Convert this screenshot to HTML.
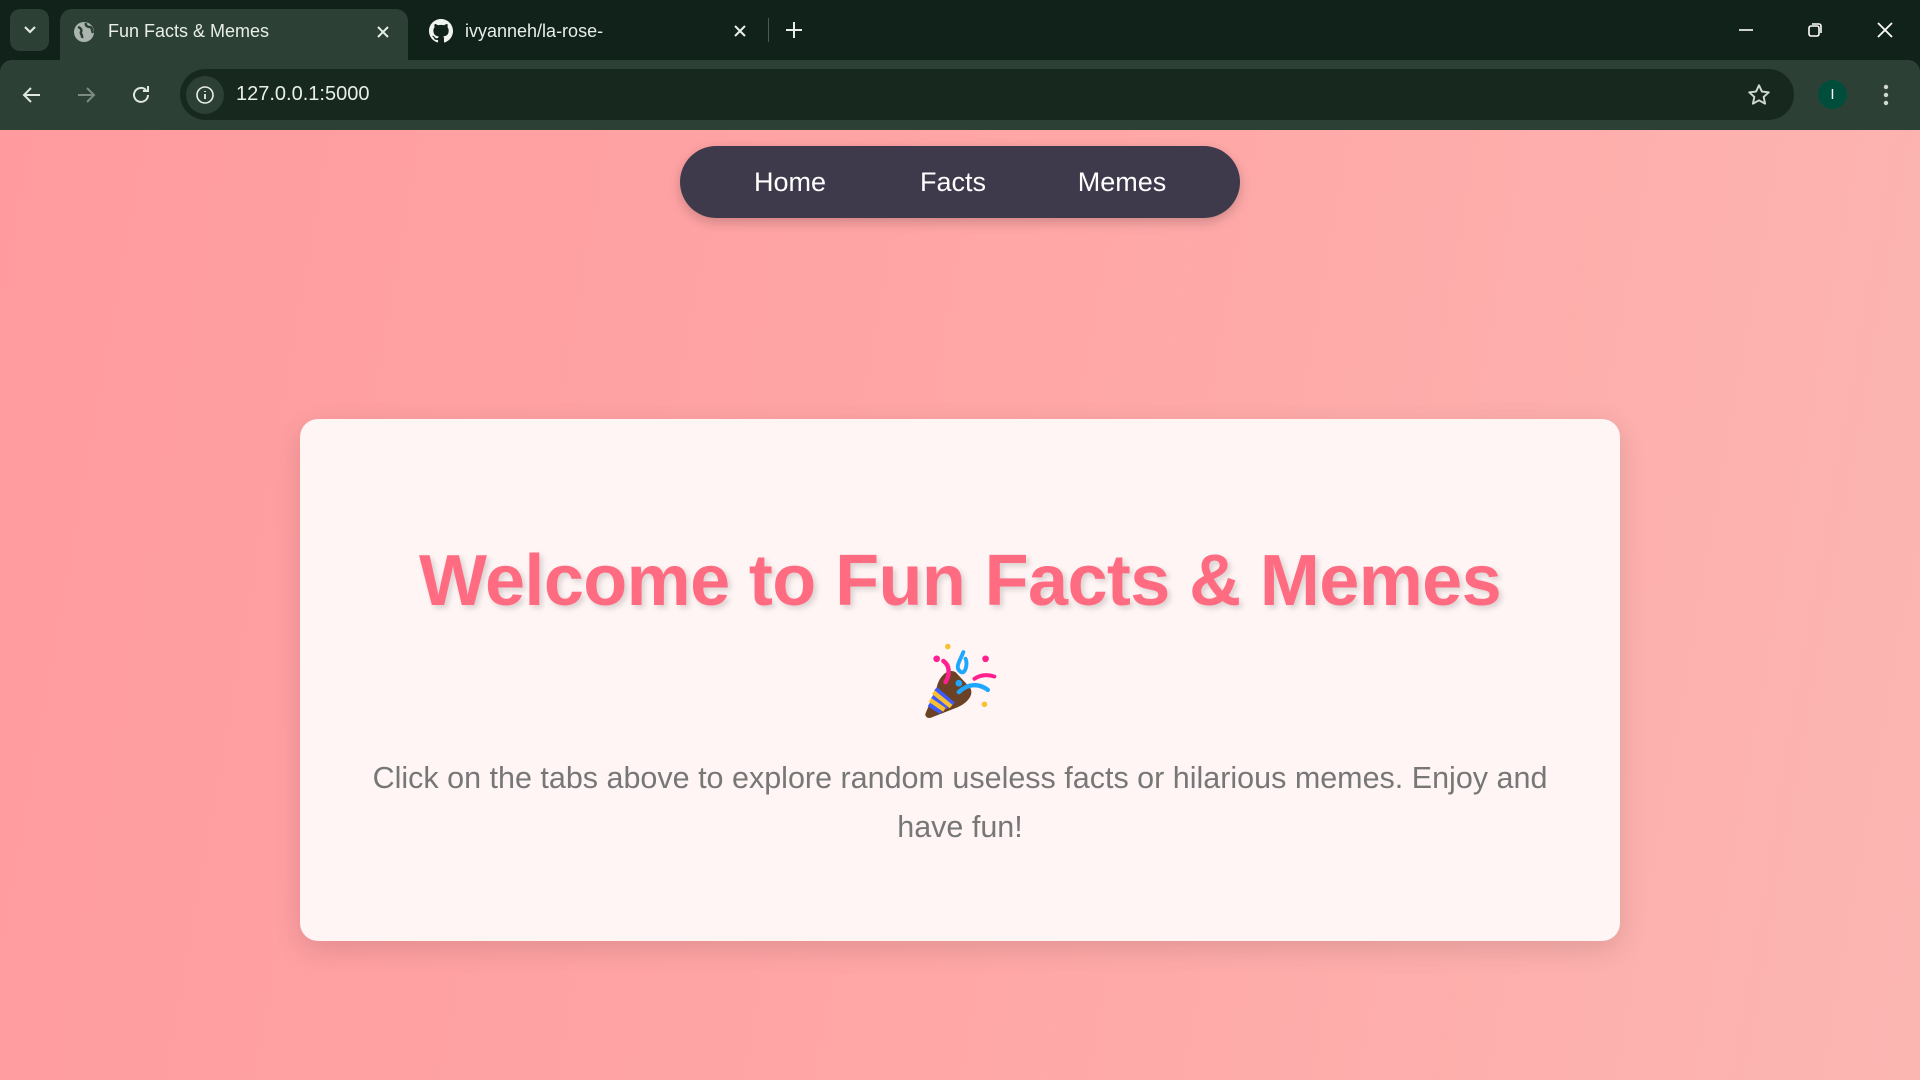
<!DOCTYPE html>
<html><head><meta charset="utf-8"><style>
*{margin:0;padding:0;box-sizing:border-box}
body{width:1920px;height:1080px;overflow:hidden;font-family:"Liberation Sans",sans-serif;background:#10221a;position:relative}
.tabbar{position:absolute;top:0;left:0;width:1920px;height:60px;background:#10221a}
.tabbtn{position:absolute;left:10px;top:9px;width:39px;height:42px;background:#2d4035;border-radius:10px}
.tab{position:absolute;left:60px;top:9px;width:348px;height:51px;background:#2d4035;border-radius:12px 12px 0 0}
.tab .t{position:absolute;left:48px;top:12px;color:#e8eee9;font-size:18px}
.tab2 .t{position:absolute;left:465px;top:21px;color:#e8eee9;font-size:18px}
.toolbar{position:absolute;top:60px;left:0;width:1920px;height:70px;background:#2d4035;border-radius:12px 12px 0 0}
.url{position:absolute;left:180px;top:69px;width:1614px;height:51px;background:#17291f;border-radius:26px}
.page{position:absolute;top:130px;left:0;width:1920px;height:950px;background:linear-gradient(100deg,#ff9b9f 0%,#ffa6a6 50%,#fcb6b2 100%)}
.nav{position:absolute;left:680px;top:16px;width:560px;height:72px;background:#3e3a4c;border-radius:36px;box-shadow:0 4px 12px rgba(0,0,0,.2)}
.nav span{position:absolute;top:21px;color:#fff;font-size:27px;transform:translateX(-50%)}
.card{position:absolute;left:300px;top:289px;width:1320px;height:522px;background:#fff5f5;border-radius:18px;box-shadow:0 8px 28px rgba(0,0,0,.12)}
h1{position:absolute;left:0;width:1320px;top:121px;text-align:center;color:#ff6b81;font-size:72px;font-weight:bold;letter-spacing:-0.6px;text-shadow:3px 3px 6px rgba(0,0,0,.15)}
p{position:absolute;left:45px;width:1230px;top:335px;text-align:center;color:#777;font-size:30.5px;line-height:49px}
</style></head><body>
<div class="tabbar">
<div class="tabbtn"><svg width="39" height="42"><path d="M15 18l5 5 5-5" stroke="#dfe7e1" stroke-width="2.2" fill="none"/></svg></div>
<div class="tab"><svg style="position:absolute;left:13px;top:12px" width="22" height="22"><circle cx="11" cy="11" r="10" fill="#a9b5ae"/><path d="M5 6c3 1 4 3 3 5s2 3 1 6M13 2c-1 3 2 4 4 4s2 4 3 6" stroke="#2d4035" stroke-width="2.5" fill="none"/></svg><span class="t">Fun Facts &amp; Memes</span>
<svg style="position:absolute;left:315px;top:15px" width="16" height="16"><path d="M3 3l10 10M13 3L3 13" stroke="#e8eee9" stroke-width="2"/></svg></div>
<div class="tab2"><svg style="position:absolute;left:429px;top:19px" width="24" height="24" viewBox="0 0 16 16"><path fill="#f0f4f1" d="M8 0C3.58 0 0 3.58 0 8c0 3.540 2.290 6.530 5.470 7.590.4.07.55-.17.55-.38v-1.33c-2.230.48-2.700-1.070-2.700-1.070-.36-.92-.89-1.170-.89-1.170-.73-.5.06-.49.06-.49.8.06 1.230.83 1.230.83.72 1.230 1.870.87 2.330.67.07-.52.28-.87.51-1.070-1.780-.2-3.640-.89-3.640-3.950 0-.87.31-1.590.82-2.150-.08-.2-.36-1.020.08-2.120 0 0 .67-.21 2.200.82.64-.18 1.320-.27 2-.27.68 0 1.360.09 2 .27 1.530-1.040 2.200-.82 2.200-.82.44 1.100.16 1.920.08 2.120.51.56.82 1.270.82 2.150 0 3.070-1.870 3.750-3.650 3.950.29.25.54.73.54 1.480v2.200c0 .21.15.46.55.38A8.010 8.010 0 0016 8c0-4.420-3.580-8-8-8z"/></svg><span class="t">ivyanneh/la-rose-</span>
<svg style="position:absolute;left:732px;top:23px" width="16" height="16"><path d="M3 3l10 10M13 3L3 13" stroke="#e8eee9" stroke-width="2"/></svg>
<div style="position:absolute;left:768px;top:18px;width:1px;height:24px;background:#4a5c51"></div>
<svg style="position:absolute;left:784px;top:20px" width="20" height="20"><path d="M10 2v16M2 10h16" stroke="#e8eee9" stroke-width="2"/></svg></div>
<svg style="position:absolute;left:1738px;top:20px" width="20" height="20"><path d="M1 10h14" stroke="#fff" stroke-width="1.6"/></svg>
<svg style="position:absolute;left:1806px;top:20px" width="20" height="20"><rect x="3" y="6" width="10" height="10" rx="2" stroke="#fff" stroke-width="1.6" fill="none"/><path d="M6 4h7a2 2 0 012 2v7" stroke="#fff" stroke-width="1.6" fill="none"/></svg>
<svg style="position:absolute;left:1875px;top:20px" width="20" height="20"><path d="M3 3l14 14M17 3L3 17" stroke="#fff" stroke-width="1.8"/></svg>
</div>
<div class="toolbar"></div>
<svg style="position:absolute;left:20px;top:83px" width="24" height="24"><path d="M20 12H5M11 5l-7 7 7 7" stroke="#dfe7e1" stroke-width="2" fill="none"/></svg>
<svg style="position:absolute;left:74px;top:83px" width="24" height="24"><path d="M4 12h15M13 5l7 7-7 7" stroke="#7d8a82" stroke-width="2" fill="none"/></svg>
<svg style="position:absolute;left:129px;top:83px" width="24" height="24"><path d="M19 12a7 7 0 11-2-5" stroke="#dfe7e1" stroke-width="2" fill="none"/><path d="M19 3v5h-5" stroke="#dfe7e1" stroke-width="2" fill="none"/></svg>
<div class="url"></div>
<div style="position:absolute;left:186px;top:76px;width:38px;height:38px;border-radius:50%;background:#2d4035"></div>
<svg style="position:absolute;left:195px;top:85px" width="20" height="20"><circle cx="10" cy="10" r="8" stroke="#e8eee9" stroke-width="1.6" fill="none"/><path d="M10 9v5M10 6v1" stroke="#e8eee9" stroke-width="1.8"/></svg>
<span style="position:absolute;left:236px;top:83px;color:#e8eee9;font-size:20px">127.0.0.1:5000</span>
<svg style="position:absolute;left:1746px;top:82px" width="26" height="26" viewBox="0 0 24 24"><path d="M12 3l2.7 5.8 6.3.7-4.7 4.3 1.3 6.2L12 16.9 6.4 20l1.3-6.2L3 9.5l6.3-.7z" stroke="#cfd8d2" stroke-width="1.8" fill="none" stroke-linejoin="round"/></svg>
<div style="position:absolute;left:1818px;top:80px;width:29px;height:29px;border-radius:50%;background:#004d3c;color:#fff;font-size:15px;text-align:center;line-height:29px">I</div>
<svg style="position:absolute;left:1878px;top:82px" width="16" height="26"><circle cx="8" cy="5" r="2.2" fill="#cfd8d2"/><circle cx="8" cy="13" r="2.2" fill="#cfd8d2"/><circle cx="8" cy="21" r="2.2" fill="#cfd8d2"/></svg>
<div class="page">
<div class="nav"><span style="left:110px">Home</span><span style="left:273px">Facts</span><span style="left:442px">Memes</span></div>
<div class="card">
<h1>Welcome to Fun Facts &amp; Memes</h1>
<svg style="position:absolute;left:620px;top:222px" width="80" height="80" viewBox="45 20 68 72">
<path d="M75 48 C68 44 60 52 58 62 L48 85 C47 88 50 90 53 89 L76 80 C86 76 92 68 88 62 Z" fill="#6b4226"/>
<path d="M54 70 L68 80 M51 77 L62 84 M57 63 L73 77" stroke="#3d5afe" stroke-width="4"/>
<path d="M52 73 L65 82 M55 66 L71 79" stroke="#fbc02d" stroke-width="4"/>
<path d="M64 38 C70 42 70 50 66 57" stroke="#ff1f8e" stroke-width="4" fill="none" stroke-linecap="round"/>
<path d="M82 30 C78 40 74 44 80 48 C84 50 86 40 84 36" stroke="#1ea7ff" stroke-width="3.5" fill="none" stroke-linecap="round"/>
<path d="M78 66 C86 58 96 58 104 64" stroke="#1ea7ff" stroke-width="4" fill="none" stroke-linecap="round"/>
<path d="M92 54 C98 50 104 50 110 52" stroke="#ff1f8e" stroke-width="3.5" fill="none" stroke-linecap="round"/>
<circle cx="58" cy="36" r="3" fill="#ff1f8e"/><circle cx="102" cy="36" r="3" fill="#ff1f8e"/><circle cx="68" cy="25" r="2.5" fill="#fbc02d"/><circle cx="101" cy="77" r="2.5" fill="#fbc02d"/><circle cx="78" cy="58" r="3" fill="#1ea7ff"/>
</svg>
<p>Click on the tabs above to explore random useless facts or hilarious memes. Enjoy and have fun!</p>
</div>
</div>
</body></html>
